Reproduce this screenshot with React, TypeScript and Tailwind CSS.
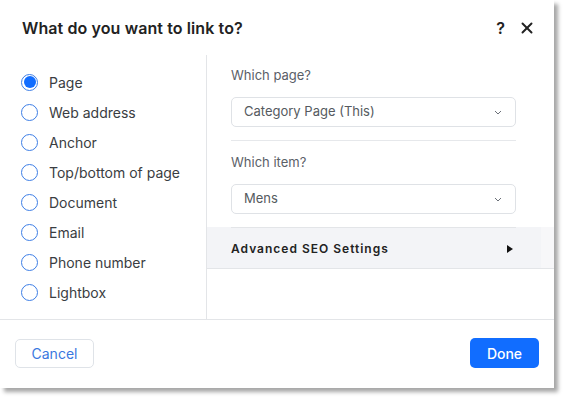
import { X } from 'lucide-react'

const OPTIONS = [
  'Page', 'Web address', 'Anchor', 'Top/bottom of page',
  'Document', 'Email', 'Phone number', 'Lightbox'
]

function Radio({ checked }: { checked: boolean }) {
  return (
    <span className={`w-[17px] h-[17px] rounded-full border-[1.5px] border-[#3d7ee6] flex items-center justify-center ${checked ? 'bg-white' : ''}`}>
      {checked && <span className="w-[12px] h-[12px] rounded-full bg-[#116dff]" />}
    </span>
  )
}

function Select({ value }: { value: string }) {
  return (
    <div className="h-[30px] border border-[#dfe2e6] rounded-[5px] flex items-center justify-between pl-[12px] pr-[13px]">
      <span className="text-[13px] text-[#555a60]">{value}</span>
      <svg width="8" height="5" viewBox="0 0 8 5" fill="none">
        <path d="M1 1l3 3 3-3" stroke="#6b7078" strokeWidth="1" />
      </svg>
    </div>
  )
}

export default function App() {
  return (
    <div className="w-[566px] h-[400px] bg-white" style={{ fontFamily: 'Inter, "Open Sans", sans-serif' }}>
      <div className="w-[554px] h-[388px] bg-white flex flex-col shadow-[4px_4px_4px_rgba(0,0,0,0.35)]">
        <div className="h-[55px] flex items-center justify-between pl-[22px] pr-[18px] shrink-0">
          <h1 className="text-[16px] font-semibold text-[#222] tracking-[0.1px]">What do you want to link to?</h1>
          <div className="flex items-center gap-[13px]">
            <span className="text-[16px] font-semibold text-[#222]">?</span>
            <X size={18} strokeWidth={2.6} color="#222" />
          </div>
        </div>

        <div className="flex h-[265px] border-b border-[#e3e5e8]">
          <div className="w-[207px] border-r border-[#e3e5e8] pt-[12px] pl-[21px] shrink-0">
            {OPTIONS.map((o, i) => (
              <div key={o} className="h-[30px] flex items-center gap-[11px]">
                <Radio checked={i === 0} />
                <span className="text-[14px] text-[#3a3d42]">{o}</span>
              </div>
            ))}
          </div>

          <div className="flex-1">
            <div className="pl-[24px] pr-[38px] pt-[12px]">
              <div className="text-[13px] text-[#5b6068] h-[16px] leading-[16px] mb-[14px]">Which page?</div>
              <Select value="Category Page (This)" />
              <div className="h-px bg-[#e6e8eb] mt-[13px]" />
              <div className="text-[13px] text-[#5b6068] h-[16px] leading-[16px] mt-[13px] mb-[14px]">Which item?</div>
              <Select value="Mens" />
            </div>
            <div className="mt-[13px] h-[42px] bg-[#f3f4f7] border-b border-[#e3e5e8] flex relative">
              <div className="absolute left-[24px] right-[38px] top-0 h-px bg-[#e3e5e8]" />
              <div className="flex-1 flex items-center justify-between pl-[24px] pr-[28px] pt-[2px]">
                <span className="text-[12px] font-semibold text-[#222] tracking-[1px]">Advanced SEO Settings</span>
                <svg width="6" height="8" viewBox="0 0 6 8">
                  <path d="M0 0l6 4-6 4z" fill="#111" />
                </svg>
              </div>
              <div className="w-[13px] bg-[#f7f7f9]" />
            </div>
          </div>
        </div>

        <div className="flex-1 flex items-center justify-between pl-[15px] pr-[15px] pb-[2px]">
          <button className="h-[29px] w-[79px] border border-[#dfe3e8] rounded-[5px] text-[14px] text-[#3a78e0]">Cancel</button>
          <button className="h-[30px] w-[69px] bg-[#116dff] rounded-[5px] text-[14px] font-medium text-white">Done</button>
        </div>
      </div>
    </div>
  )
}
